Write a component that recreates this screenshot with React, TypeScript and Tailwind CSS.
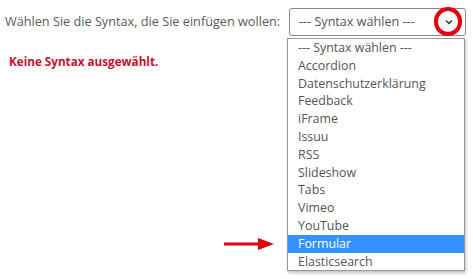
import React from "react";

const items = [
  "--- Syntax wählen ---",
  "Accordion",
  "Datenschutzerklärung",
  "Feedback",
  "iFrame",
  "Issuu",
  "RSS",
  "Slideshow",
  "Tabs",
  "Vimeo",
  "YouTube",
  "Formular",
  "Elasticsearch",
];

export default function App() {
  return (
    <div
      className="relative w-[473px] h-[279px] bg-white overflow-hidden"
      style={{ fontFamily: '"Open Sans", sans-serif' }}
    >
      <div className="flex items-center pt-[8px] pl-[5px]">
        <span className="text-[12.7px] text-[#5a5a5a] w-[284px] shrink-0 whitespace-nowrap">
          Wählen Sie die Syntax, die Sie einfügen wollen:
        </span>
        <div className="flex shrink-0 items-center justify-between w-[177px] h-[28px] border border-[#888] rounded-[3px] pl-[9px] pr-[11px] text-[12.6px] text-[#555]">
          <span className="whitespace-nowrap">--- Syntax wählen ---</span>
          <svg width="10" height="8" viewBox="0 0 10 8">
            <path d="M2 2.5 L5 5.5 L8 2.5" fill="none" stroke="#333" strokeWidth="1.4" />
          </svg>
        </div>
      </div>
      <div className="pl-[9px] pt-[17px] text-[11.7px] font-bold text-[#c8102e]">
        Keine Syntax ausgewählt.
      </div>

      {/* red circle annotation */}
      <div className="absolute left-[434px] top-[7px] w-[28px] h-[29px] rounded-full border-[4px] border-[#e3000f]" />

      {/* dropdown list */}
      <div className="absolute left-[287px] top-[38px] w-[178px] border border-[#999] bg-white shadow-[1px_2px_3px_rgba(0,0,0,0.25)]">
        {items.map((it) => (
          <div
            key={it}
            className={
              it === "Formular"
                ? "h-[17.8px] leading-[17.8px] pl-[10px] text-[12.4px] whitespace-nowrap bg-[#3392ff] text-white"
                : "h-[17.8px] leading-[17.8px] pl-[10px] text-[12.4px] whitespace-nowrap text-[#555]"
            }
          >
            {it}
          </div>
        ))}
      </div>

      {/* red arrow annotation */}
      <svg className="absolute left-[222px] top-[237px]" width="54" height="14" viewBox="0 0 54 14">
        <rect x="2" y="5.5" width="36" height="3" fill="#e3000f" />
        <polygon points="36,1 52,7 36,13" fill="#e3000f" />
      </svg>
    </div>
  );
}
